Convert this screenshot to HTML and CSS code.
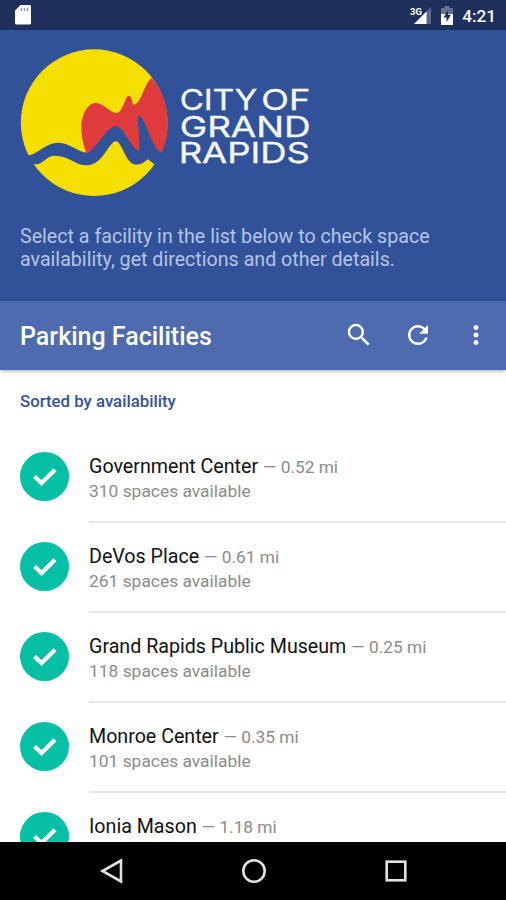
FILE: index.html
```html
<!DOCTYPE html>
<html lang="en">
<head>
    <meta charset="UTF-8">
    <meta name="viewport" content="width=device-width, initial-scale=1.0">
    <title>Parking Facilities</title>
    <link rel="stylesheet" href="styles.css">
</head>
<body>
    <!-- Check mark shared by all list rows -->
    <svg class="sprite" aria-hidden="true">
        <symbol id="check" viewBox="0 0 49 49">
            <path d="M14.500 24.500 L21.500 31 L35 17.700" fill="none" stroke="#fff" stroke-width="4.300"/>
        </symbol>
    </svg>

    <div class="status-bar">
        <svg class="sd-card" width="16" height="20" viewBox="0 0 16 20">
            <path d="M5.500 0H14.500Q16 0 16 1.500V18Q16 19.500 14.500 19.500H1.500Q0 19.500 0 18V5.500Z" fill="#fff"/>
            <path d="M6.500 3v3M9.500 3v3M12.500 3v3" stroke="#8d97b3" stroke-width="1.500"/>
        </svg>
        <div class="status-icons">
            <svg width="22" height="20" viewBox="0 0 22 20">
                <path d="M21 2V19H4Z" fill="#5a688f"/>
                <path d="M16.500 6.500V19H4Z" fill="#fff"/>
                <text class="network" x="0" y="9.500">3G</text>
            </svg>
            <svg width="12" height="19" viewBox="0 0 12 19">
                <path d="M3.500 0H8.500V2H12V8H0V2H3.500Z" fill="#65718f"/>
                <path d="M0 8H12V19H0Z" fill="#fff"/>
                <path d="M7 4L2.500 11.500H5.500V16L10 8.800H7Z" fill="#1f2f5b"/>
            </svg>
            <span class="clock">4:21</span>
        </div>
    </div>

    <header class="header">
        <svg class="logo" width="300" height="150" viewBox="60 54 900 450">
            <circle cx="282.500" cy="278" r="220" fill="#f5df00"/>
            <path d="M455 144C488 180 503 230 503 280C503 315 497 342 485 368L440 380L408 385L347 310L264 380C250 350 244 320 244 294C244 250 265 219 288 219C311 219 330 249 349 249C369 249 374 197 387 197C397 197 394 224 403 224C425 218 433 159 455 144Z" fill="#df3b3d"/>
            <path d="M55 376H88C115 370 140 338 174 338C210 338 235 368 264 368C292 350 324 288 347 288C375 292 396 362 416 361C424 335 407 258 416 258C437 260 450 350 486 370H515V403H463L444 388C432 396 428 404 408 404C377 404 366 334 348 334C326 334 310 406 260 406C226 406 205 377 165 377C138 377 132 402 106 403H55Z" fill="#315298"/>
            <g class="logo-text">
                <text x="539" y="240" textLength="233" lengthAdjust="spacingAndGlyphs">CITY</text>
                <text x="784" y="240" textLength="147" lengthAdjust="spacingAndGlyphs">OF</text>
                <text x="539" y="320" textLength="393" lengthAdjust="spacingAndGlyphs">GRAND</text>
                <text x="536" y="400" textLength="394" lengthAdjust="spacingAndGlyphs">RAPIDS</text>
            </g>
        </svg>
        <p class="intro">Select a facility in the list below to check space<br>availability, get directions and other details.</p>
    </header>

    <div class="toolbar">
        <h1>Parking Facilities</h1>
        <svg class="search" width="30" height="30" viewBox="0 0 24 24">
            <path d="M15.500 14h-.79l-.28-.27A6.471 6.471 0 0 0 16 9.500 6.500 6.500 0 1 0 9.500 16c1.610 0 3.090-.59 4.230-1.570l.27.28v.79l5 4.990L20.490 19l-4.990-5zm-6 0C7.010 14 5 11.990 5 9.500S7.010 5 9.500 5 14 7.010 14 9.500 11.990 14 9.500 14z"/>
        </svg>
        <svg class="refresh" width="30" height="30" viewBox="0 0 24 24">
            <path d="M17.650 6.350A7.958 7.958 0 0 0 12 4c-4.420 0-7.990 3.580-7.990 8s3.570 8 7.990 8c3.730 0 6.840-2.550 7.730-6h-2.080A5.990 5.990 0 0 1 12 18c-3.310 0-6-2.690-6-6s2.690-6 6-6c1.660 0 3.140.69 4.220 1.780L13 11h7V4l-2.350 2.350z"/>
        </svg>
        <svg class="more" width="30" height="30" viewBox="0 0 24 24">
            <path d="M12 8c1.100 0 2-.9 2-2s-.9-2-2-2-2 .9-2 2 .9 2 2 2zm0 2c-1.100 0-2 .9-2 2s.9 2 2 2 2-.9 2-2-.9-2-2-2zm0 6c-1.100 0-2 .9-2 2s.9 2 2 2 2-.9 2-2-.9-2-2-2z"/>
        </svg>
    </div>

    <main class="content">
        <h2>Sorted by availability</h2>
        <ul class="facilities">
            <li>
                <svg class="badge"><use href="#check"/></svg>
                <div class="details">
                    <div class="name">Government Center <span>— 0.52 mi</span></div>
                    <div class="spaces">310 spaces available</div>
                </div>
            </li>
            <li>
                <svg class="badge"><use href="#check"/></svg>
                <div class="details">
                    <div class="name">DeVos Place <span>— 0.61 mi</span></div>
                    <div class="spaces">261 spaces available</div>
                </div>
            </li>
            <li>
                <svg class="badge"><use href="#check"/></svg>
                <div class="details">
                    <div class="name">Grand Rapids Public Museum <span>— 0.25 mi</span></div>
                    <div class="spaces">118 spaces available</div>
                </div>
            </li>
            <li>
                <svg class="badge"><use href="#check"/></svg>
                <div class="details">
                    <div class="name">Monroe Center <span>— 0.35 mi</span></div>
                    <div class="spaces">101 spaces available</div>
                </div>
            </li>
            <li>
                <svg class="badge"><use href="#check"/></svg>
                <div class="details">
                    <div class="name">Ionia Mason <span>— 1.18 mi</span></div>
                </div>
            </li>
        </ul>
    </main>

    <nav class="nav-bar">
        <svg width="26" height="26" viewBox="0 0 26 26"><path d="M22 2.500V23.500L3.500 13Z"/></svg>
        <svg width="26" height="26" viewBox="0 0 26 26"><circle cx="13" cy="13" r="10.700"/></svg>
        <svg width="26" height="26" viewBox="0 0 26 26"><rect x="3.700" y="3.700" width="18.600" height="18.600"/></svg>
    </nav>
</body>
</html>
```
FILE: styles.css
```css
* {
    box-sizing: border-box;
}
body {
    display: flex;
    flex-direction: column;
    height: 900px;
    margin: 0;
    overflow: hidden;
    background-color: #fff;
    font-family: Roboto, "Noto Sans", sans-serif;
}
.sprite {
    display: none;
}
.status-bar {
    display: flex;
    flex: none;
    justify-content: space-between;
    align-items: center;
    height: 30px;
    padding: 0 10px 0 15px;
    background-color: #1f2f5b;
}
.status-icons {
    display: flex;
    align-items: center;
    gap: 9px;
}
.network {
    fill: #fff;
    font-size: 9.5px;
    font-weight: bold;
}
.clock {
    padding-top: 2px;
    color: #fff;
    font-size: 17.2px;
    font-weight: 500;
    line-height: 28px;
}
.header {
    flex: none;
    height: 271px;
    padding: 18px 20px 0;
    background-color: #315298;
}
.logo {
    display: block;
}
.logo-text {
    fill: #f3f7ff;
    stroke: #f3f7ff;
    stroke-width: 1;
    font-family: Inter, "Liberation Sans", sans-serif;
    font-size: 86px;
    font-weight: 400;
}
.intro {
    margin: 27px 0 0;
    color: #b5c4e6;
    font-size: 19.65px;
    line-height: 23px;
    white-space: nowrap;
}
.toolbar {
    display: flex;
    flex: none;
    align-items: center;
    height: 69px;
    padding: 0 15px 0 20px;
    background-color: #4d6bae;
    box-shadow: 0 1px 4px rgba(0,0,0,0.35);
}
.toolbar h1 {
    flex: 1;
    margin: 0;
    padding-top: 2px;
    color: #fff;
    font-size: 25px;
    font-weight: 500;
}
.toolbar svg {
    fill: #fff;
    margin-bottom: 2px;
}
.toolbar .search {
    margin-right: 29px;
}
.toolbar .refresh {
    margin-right: 28px;
}
.content {
    flex: 1;
    min-height: 0;
    overflow: hidden;
}
.content h2 {
    margin: 21px 20px 22px;
    color: #3153a0;
    font-size: 16.8px;
    font-weight: 500;
    line-height: 20px;
}
.facilities {
    margin: 0;
    padding: 0;
    list-style: none;
}
.facilities li {
    display: flex;
    height: 90px;
    padding-left: 20px;
}
.badge {
    flex: none;
    width: 49px;
    height: 49px;
    margin: 18.5px 20px 0 0;
    border-radius: 50%;
    background-color: #06bfa5;
}
.details {
    flex: 1;
    padding-top: 21px;
    border-bottom: 2px solid #e6e6e6;
    white-space: nowrap;
}
.name {
    color: #111;
    font-size: 19.65px;
    line-height: 25px;
}
.name span {
    color: #8b8b8b;
    font-size: 17.3px;
}
.spaces {
    color: #8b8b8b;
    font-size: 17.4px;
    line-height: 23px;
}
.nav-bar {
    display: flex;
    flex: none;
    justify-content: center;
    align-items: center;
    gap: 116px;
    height: 58px;
    padding-left: 2px;
    background-color: #000;
}
.nav-bar svg {
    fill: none;
    stroke: #e2e2e2;
    stroke-width: 2.6;
}
```
